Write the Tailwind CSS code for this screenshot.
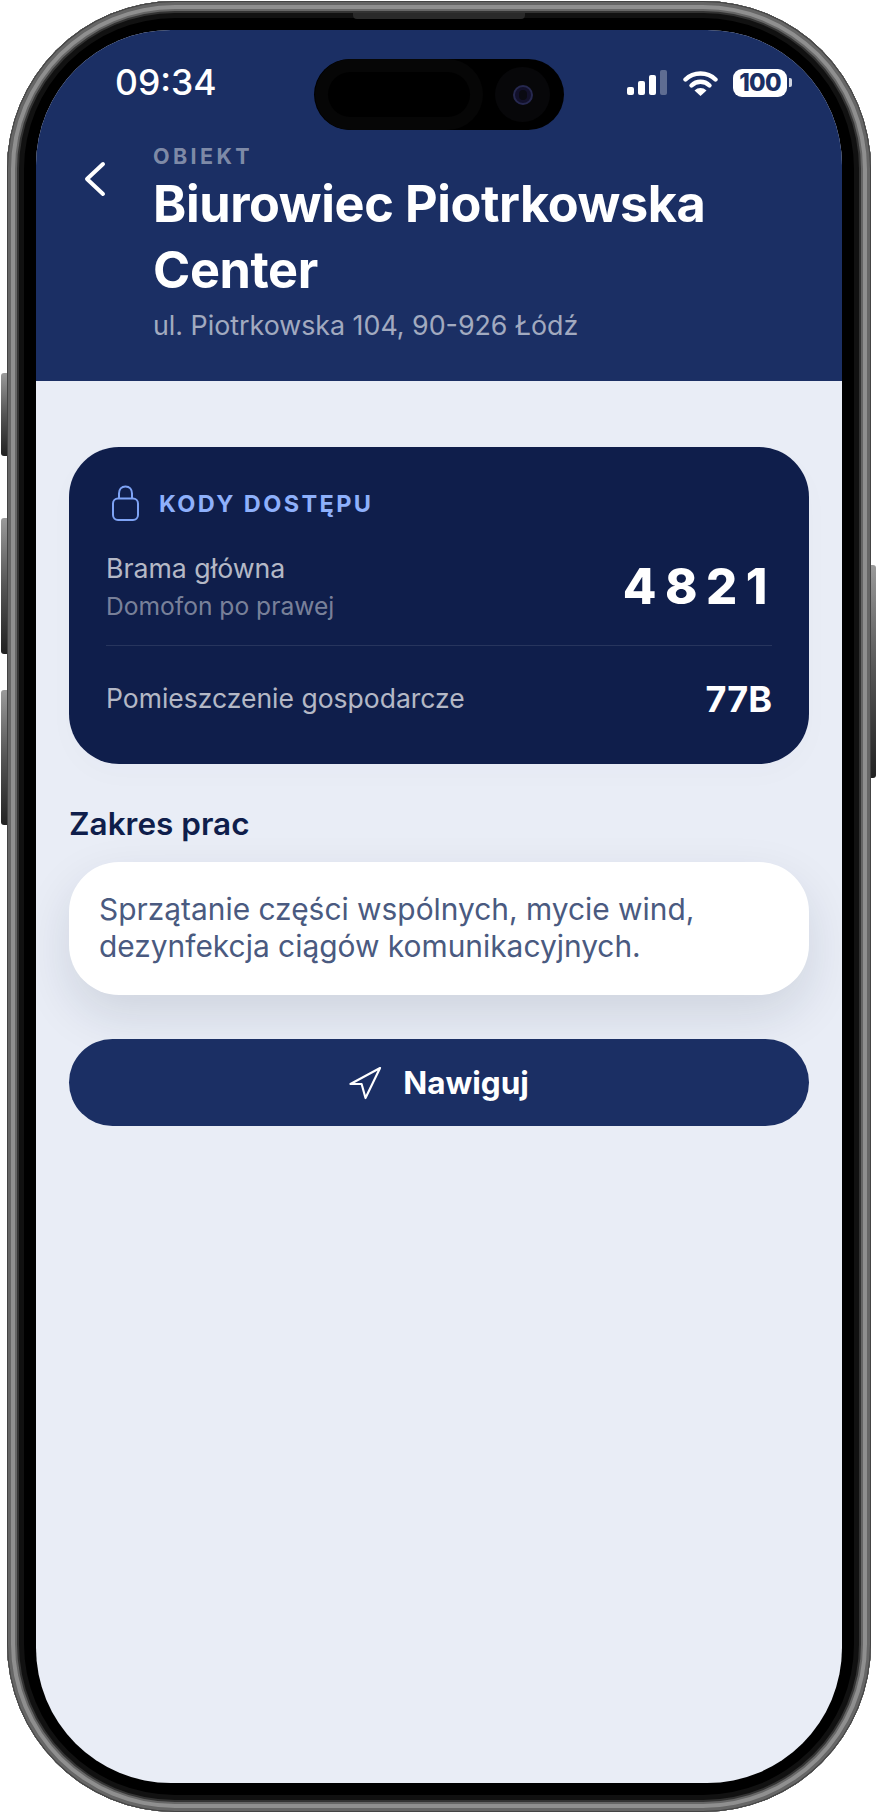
<!DOCTYPE html>
<html lang="pl">
<head>
    <meta charset="UTF-8">
    <title>Obiekt</title>
    <script src="https://cdn.jsdelivr.net/npm/@tailwindcss/browser@4"></script>
</head>
<body class="bg-white font-['Inter',sans-serif]">
    <div class="relative w-[878px] h-[1814px] overflow-hidden">
        <!-- side buttons -->
        <div class="absolute left-[1px] top-[373px] w-[8px] h-[83px] rounded-l-[3px] bg-gradient-to-b from-[#9a9a9a] via-[#555] to-[#222]"></div>
        <div class="absolute left-[1px] top-[518px] w-[8px] h-[136px] rounded-l-[3px] bg-gradient-to-b from-[#9a9a9a] via-[#555] to-[#222]"></div>
        <div class="absolute left-[1px] top-[690px] w-[8px] h-[135px] rounded-l-[3px] bg-gradient-to-b from-[#9a9a9a] via-[#555] to-[#222]"></div>
        <div class="absolute left-[869px] top-[565px] w-[7px] h-[213px] rounded-r-[3px] bg-gradient-to-b from-[#9a9a9a] via-[#555] to-[#222]"></div>

        <!-- phone frame -->
        <div class="absolute left-[7px] top-[1px] w-[864px] h-[1811px] p-[29px] rounded-[168px] bg-black shadow-[inset_0_0_0_1px_#444,inset_0_0_0_4px_#666,inset_0_0_0_8px_#8f8f8f,inset_0_0_0_10px_#666,inset_0_0_0_12px_#333,inset_0_0_0_17px_#111]">
            <!-- speaker -->
            <div class="absolute left-[346px] top-[12px] w-[172px] h-[6px] rounded-b-[4px] bg-[#2a2a2a]"></div>

            <!-- screen -->
            <div class="relative h-full rounded-[135px] overflow-hidden bg-[#e9edf6]">
                <!-- dynamic island -->
                <div class="absolute left-[278px] top-[29px] w-[250px] h-[71px] rounded-full bg-black">
                    <div class="absolute left-[14px] top-[13px] w-[142px] h-[45px] rounded-full bg-black shadow-[0_0_0_13px_#060606]"></div>
                    <div class="absolute left-[181px] top-[8px] w-[55px] h-[55px] rounded-full bg-[#070709] flex items-center justify-center">
                        <div class="w-[20px] h-[20px] rounded-full bg-[#12102a] border-2 border-[#26284f] flex items-center justify-center">
                            <div class="w-[8px] h-[10px] rounded-full bg-[#0a0a12]"></div>
                        </div>
                    </div>
                </div>

                <header class="h-[351px] bg-[#1b2f64] text-white">
                    <!-- status bar -->
                    <div class="flex items-center justify-between h-[55px] pt-[25px] pl-[79px] pr-[50px] box-content">
                        <span class="text-[35.5px] leading-[55px] font-medium">09:34</span>
                        <div class="flex items-center">
                            <div class="flex items-end gap-[4px] h-[25px]">
                                <div class="w-[7px] h-[8px] rounded-[2px] bg-white"></div>
                                <div class="w-[7px] h-[14px] rounded-[2px] bg-white"></div>
                                <div class="w-[7px] h-[20px] rounded-[2px] bg-white"></div>
                                <div class="w-[7px] h-[25px] rounded-[2px] bg-white/30"></div>
                            </div>
                            <svg class="ml-[16px]" width="35" height="26" viewBox="0 0 35 26" fill="none">
                                <path d="M2.5 9.5C10.5 1.5 24.5 1.5 32.5 9.5" stroke="white" stroke-width="4.4" stroke-linecap="round"/>
                                <path d="M8.5 15.5C13.5 10.5 21.5 10.5 26.5 15.5" stroke="white" stroke-width="4.4" stroke-linecap="round"/>
                                <path d="M17.5 26L11.5 20.5C15 17.2 20 17.2 23.5 20.5Z" fill="white"/>
                            </svg>
                            <div class="ml-[15px] w-[54px] h-[28px] rounded-[9px] bg-white flex items-center justify-center text-[#1b2f64] text-[24px] font-extrabold tracking-[-0.7px]">100</div>
                            <div class="ml-[2px] w-[3px] h-[9px] rounded-r-[2px] bg-white/80"></div>
                        </div>
                    </div>

                    <!-- title block -->
                    <div class="flex mt-[34px]">
                        <div class="w-[117px] pl-[48px] pt-[17px] shrink-0">
                            <svg width="24" height="36" viewBox="0 0 24 36" fill="none">
                                <path d="M19 3L3 18L19 33" stroke="white" stroke-width="4" stroke-linecap="round" stroke-linejoin="round"/>
                            </svg>
                        </div>
                        <div>
                            <p class="text-[21.5px] leading-[24px] font-bold tracking-[3.4px] text-white/45">OBIEKT</p>
                            <h1 class="mt-[3px] text-[50.4px] leading-[66px] font-bold tracking-[-0.4px]">Biurowiec Piotrkowska<br>Center</h1>
                            <p class="mt-[4px] text-[26.8px] leading-[36px] text-white/60">ul. Piotrkowska 104, 90-926 Łódź</p>
                        </div>
                    </div>
                </header>

                <main class="px-[33px] pt-[66px]">
                    <!-- access codes -->
                    <section class="h-[317px] rounded-[50px] bg-[#0f1e4b] px-[37px] pt-[37px] shadow-[0_10px_30px_rgba(16,31,77,0.02)]">
                        <div class="flex items-center h-[38px]">
                            <svg class="ml-[6px]" width="27" height="36" viewBox="0 0 27 36" fill="none" stroke="#7ea3f5" stroke-width="2">
                                <rect x="1" y="13.5" width="25" height="21.5" rx="5"/>
                                <path d="M7 13.5V8.5C7 4.5 9.5 1.5 13.5 1.5C17.5 1.5 20 4.5 20 8.5V13.5"/>
                            </svg>
                            <span class="ml-[20px] pt-[2px] text-[23.5px] font-bold tracking-[2.4px] text-[#8eb0fb]">KODY DOSTĘPU</span>
                        </div>
                        <div class="flex items-center justify-between mt-[20px] h-[89px] border-b border-white/10 pb-[14px] box-content">
                            <div>
                                <p class="text-[26.7px] leading-[38px] text-white/70">Brama główna</p>
                                <p class="text-[24.6px] leading-[38px] text-white/45">Domofon po prawej</p>
                            </div>
                            <span class="text-[49px] font-extrabold tracking-[8.5px] text-white -mr-[4px]">4821</span>
                        </div>
                        <div class="flex items-center justify-between mt-[28px] h-[50px]">
                            <span class="text-[26.5px] text-white/70">Pomieszczenie gospodarcze</span>
                            <span class="text-[36px] font-bold text-white">77B</span>
                        </div>
                    </section>

                    <h2 class="mt-[41px] text-[31.5px] leading-[38px] font-semibold text-[#0f1e4b]">Zakres prac</h2>

                    <section class="mt-[19px] h-[133px] rounded-[50px] bg-white px-[30px] py-[29px] text-[29.9px] leading-[37px] text-[#4a5a80] shadow-[0_20px_50px_rgba(15,30,60,0.12)]">
                        Sprzątanie części wspólnych, mycie wind,<br>dezynfekcja ciągów komunikacyjnych.
                    </section>

                    <button class="mt-[44px] w-full h-[87px] rounded-[44px] bg-[#1b2f64] flex items-center justify-center text-white text-[31.5px] font-bold">
                        <svg width="33" height="34" viewBox="0 0 34 34" fill="none">
                            <path d="M32 1.5L1.5 18L13 18L17 32.5Z" stroke="white" stroke-width="2.2" stroke-linejoin="round"/>
                        </svg>
                        <span class="ml-[21px]">Nawiguj</span>
                    </button>
                </main>
            </div>
        </div>
    </div>
</body>
</html>
